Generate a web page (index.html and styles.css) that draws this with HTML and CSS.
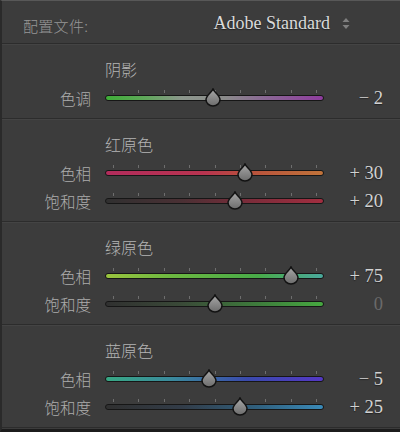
FILE: index.html
```html
<!DOCTYPE html>
<html lang="zh">
<head>
<meta charset="utf-8">
<link rel="stylesheet" href="styles.css">
</head>
<body>
<div class="panel">
  <div class="header">
    <span class="hlabel">配置文件:</span>
    <span class="profile">Adobe Standard</span>
    <svg class="updown" width="8" height="13" viewBox="0 0 8 13"><path d="M4 1 L7.5 5 L0.5 5 Z M4 12 L7.5 8 L0.5 8 Z" fill="#7f7f7f"/></svg>
  </div>

  <section class="group">
    <div class="title">阴影</div>
    <div class="row">
      <span class="label">色调</span>
      <div class="slider">
        <div class="ticks"><i></i><i></i><i></i><i></i><i></i><i></i><i></i><i></i><i></i></div>
        <div class="track t-tint"></div>
        <svg class="thumb" style="left:107.5px" viewBox="0 0 16 19"><defs><linearGradient id="g1" x1="0" y1="0" x2="0" y2="1"><stop offset="0" stop-color="#a8a8a8"/><stop offset="1" stop-color="#6c6c6c"/></linearGradient></defs><path d="M8 1 C9 4 15 7.5 15 11.5 A7 6.6 0 0 1 1 11.5 C1 7.5 7 4 8 1 Z" fill="url(#g1)" stroke="#121212" stroke-width="1.5"/></svg>
      </div>
      <span class="value">− 2</span>
    </div>
  </section>

  <section class="group">
    <div class="title">红原色</div>
    <div class="row">
      <span class="label">色相</span>
      <div class="slider">
        <div class="ticks"><i></i><i></i><i></i><i></i><i></i><i></i><i></i><i></i><i></i></div>
        <div class="track t-red-h"></div>
        <svg class="thumb" style="left:140px" viewBox="0 0 16 19"><path d="M8 1 C9 4 15 7.5 15 11.5 A7 6.6 0 0 1 1 11.5 C1 7.5 7 4 8 1 Z" fill="url(#g1)" stroke="#121212" stroke-width="1.5"/></svg>
      </div>
      <span class="value">+ 30</span>
    </div>
    <div class="row">
      <span class="label">饱和度</span>
      <div class="slider">
        <div class="ticks"><i></i><i></i><i></i><i></i><i></i><i></i><i></i><i></i><i></i></div>
        <div class="track t-red-s"></div>
        <svg class="thumb" style="left:129.8px" viewBox="0 0 16 19"><path d="M8 1 C9 4 15 7.5 15 11.5 A7 6.6 0 0 1 1 11.5 C1 7.5 7 4 8 1 Z" fill="url(#g1)" stroke="#121212" stroke-width="1.5"/></svg>
      </div>
      <span class="value">+ 20</span>
    </div>
  </section>

  <section class="group">
    <div class="title">绿原色</div>
    <div class="row">
      <span class="label">色相</span>
      <div class="slider">
        <div class="ticks"><i></i><i></i><i></i><i></i><i></i><i></i><i></i><i></i><i></i></div>
        <div class="track t-green-h"></div>
        <svg class="thumb" style="left:185.6px" viewBox="0 0 16 19"><path d="M8 1 C9 4 15 7.5 15 11.5 A7 6.6 0 0 1 1 11.5 C1 7.5 7 4 8 1 Z" fill="url(#g1)" stroke="#121212" stroke-width="1.5"/></svg>
      </div>
      <span class="value">+ 75</span>
    </div>
    <div class="row">
      <span class="label">饱和度</span>
      <div class="slider">
        <div class="ticks"><i></i><i></i><i></i><i></i><i></i><i></i><i></i><i></i><i></i></div>
        <div class="track t-green-s"></div>
        <svg class="thumb" style="left:109.5px" viewBox="0 0 16 19"><path d="M8 1 C9 4 15 7.5 15 11.5 A7 6.6 0 0 1 1 11.5 C1 7.5 7 4 8 1 Z" fill="url(#g1)" stroke="#121212" stroke-width="1.5"/></svg>
      </div>
      <span class="value zero">0</span>
    </div>
  </section>

  <section class="group">
    <div class="title">蓝原色</div>
    <div class="row">
      <span class="label">色相</span>
      <div class="slider">
        <div class="ticks"><i></i><i></i><i></i><i></i><i></i><i></i><i></i><i></i><i></i></div>
        <div class="track t-blue-h"></div>
        <svg class="thumb" style="left:104.4px" viewBox="0 0 16 19"><path d="M8 1 C9 4 15 7.5 15 11.5 A7 6.6 0 0 1 1 11.5 C1 7.5 7 4 8 1 Z" fill="url(#g1)" stroke="#121212" stroke-width="1.5"/></svg>
      </div>
      <span class="value">− 5</span>
    </div>
    <div class="row">
      <span class="label">饱和度</span>
      <div class="slider">
        <div class="ticks"><i></i><i></i><i></i><i></i><i></i><i></i><i></i><i></i><i></i></div>
        <div class="track t-blue-s"></div>
        <svg class="thumb" style="left:134.9px" viewBox="0 0 16 19"><path d="M8 1 C9 4 15 7.5 15 11.5 A7 6.6 0 0 1 1 11.5 C1 7.5 7 4 8 1 Z" fill="url(#g1)" stroke="#121212" stroke-width="1.5"/></svg>
      </div>
      <span class="value">+ 25</span>
    </div>
  </section>
</div>
</body>
</html>
```

FILE: styles.css
```css
html, body {
  margin: 0;
  padding: 0;
  background: #1c1c1c;
}

.panel {
  width: 400px;
  height: 432px;
  box-sizing: border-box;
  background: #3c3c3c;
  border-top: 1px solid #585858;
  border-left: 2px solid #2a2a2a;
  border-bottom: 3px solid #1c1c1c;
  overflow: hidden;
  font-family: "Noto Sans CJK SC", sans-serif;
  font-weight: 300;
}

.header {
  height: 43px;
  box-sizing: border-box;
  padding: 6px 0 0 21px;
  display: flex;
  align-items: center;
  border-bottom: 1px solid #2c2c2c;
}

.hlabel {
  font-size: 15px;
  color: #979797;
  letter-spacing: 0.3px;
}

.profile {
  margin-left: auto;
  margin-top: -3px;
  font-family: "Liberation Serif", serif;
  font-weight: 400;
  font-size: 18px;
  color: #dadada;
  text-shadow: 0 1px 1px #222;
}

.updown {
  margin: -3px 50px 0 12px;
}

.group {
  padding: 15px 0 6px;
  border-bottom: 1px solid #2c2c2c;
  box-shadow: inset 0 1px 0 #444;
}

.title {
  margin-left: 103px;
  height: 21px;
  line-height: 21px;
  font-size: 16px;
  color: #b4b4b4;
  margin-bottom: 4px;
}

.row {
  display: grid;
  grid-template-columns: 89px 219px 45px;
  column-gap: 14px;
  height: 28px;
  align-items: center;
}

.label {
  text-align: right;
  font-size: 15.5px;
  color: #acacac;
  line-height: 28px;
}

.value {
  text-align: right;
  font-family: "Liberation Serif", serif;
  font-weight: 400;
  font-size: 18.5px;
  color: #d2d2d2;
  line-height: 28px;
  text-shadow: 0 1px 1px #222;
}

.value.zero {
  color: #6a6a6a;
  text-shadow: none;
}

.slider {
  position: relative;
  height: 28px;
  box-sizing: border-box;
  padding-top: 6px;
}

.ticks {
  height: 3px;
  margin: 0 7px 2px 8px;
  display: flex;
  justify-content: space-between;
}

.ticks i {
  width: 1px;
  height: 3px;
  background: #6e6e6e;
}

.track {
  height: 6px;
  box-sizing: border-box;
  border: 1px solid #161616;
  border-radius: 3px;
}

.t-tint { background: linear-gradient(to right, #3fae38 0%, #5fa85a 18%, #8c968c 35%, #8a8a8a 55%, #8a6a94 72%, #8e3c9e 100%); }
.t-red-h { background: linear-gradient(to right, #b22c5c 0%, #b83450 45%, #b8503c 65%, #c0733a 100%); }
.t-red-s { background: linear-gradient(to right, #303030 0%, #4a3034 35%, #7a2c3a 65%, #a22e40 100%); }
.t-green-h { background: linear-gradient(to right, #9ac43e 0%, #6cb840 30%, #48aa48 70%, #4aa89c 100%); }
.t-green-s { background: linear-gradient(to right, #303030 0%, #3a4a38 35%, #3e7c3c 70%, #46a840 100%); }
.t-blue-h { background: linear-gradient(to right, #38a884 0%, #3a8a9c 30%, #3a4aac 65%, #5438c4 100%); }
.t-blue-s { background: linear-gradient(to right, #303030 0%, #323c48 35%, #30607e 70%, #3a8ab8 100%); }

.thumb {
  position: absolute;
  top: 4px;
  width: 16px;
  height: 19px;
  transform: translateX(-8px);
}
```
